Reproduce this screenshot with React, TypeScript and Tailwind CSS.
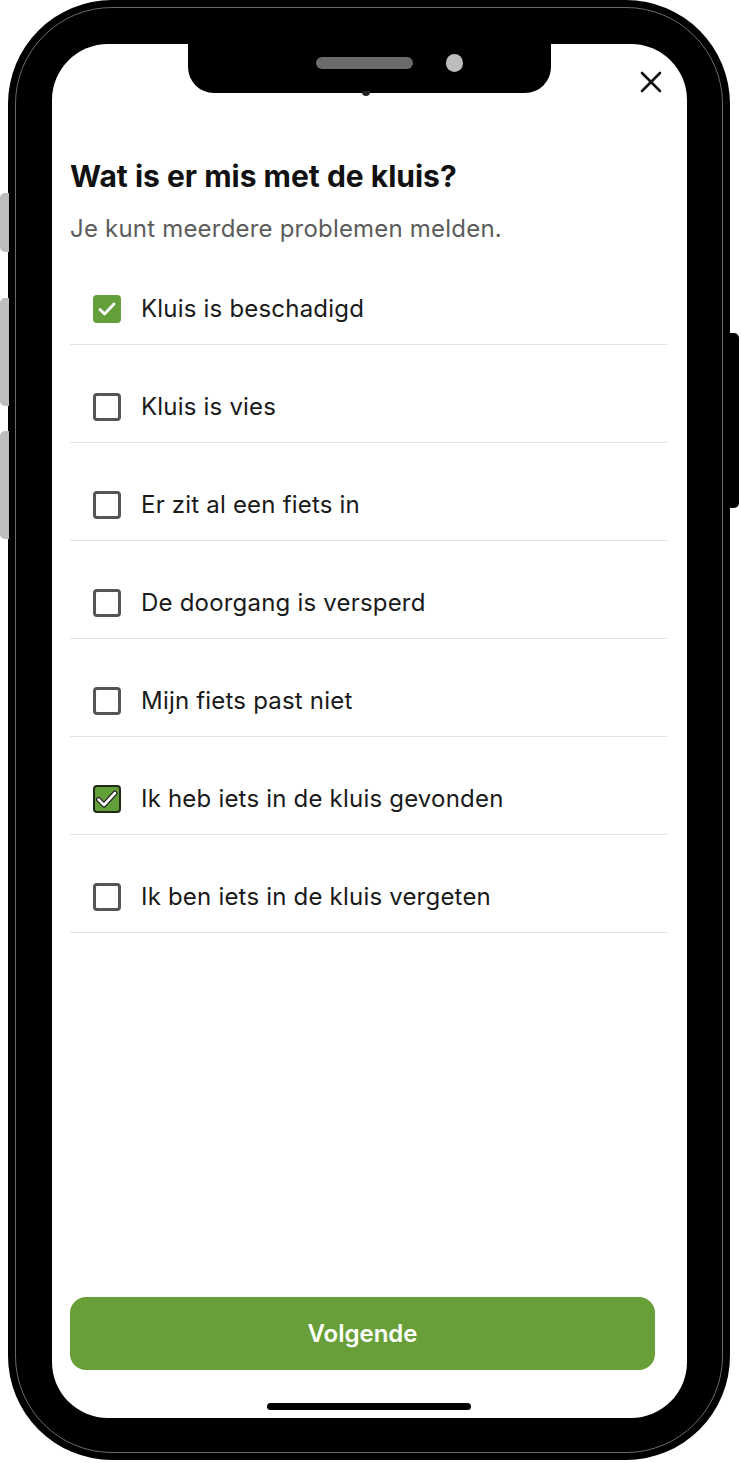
import React, { useState } from 'react';

const problems = [
  'Kluis is beschadigd',
  'Kluis is vies',
  'Er zit al een fiets in',
  'De doorgang is versperd',
  'Mijn fiets past niet',
  'Ik heb iets in de kluis gevonden',
  'Ik ben iets in de kluis vergeten',
];

function Checkbox({ checked, outlined }: { checked: boolean; outlined?: boolean }) {
  if (!checked) {
    return <div className="w-[28px] h-[28px] shrink-0 rounded-[4px] border-[3px] border-[#555555] bg-white" />;
  }
  if (outlined) {
    return (
      <div className="w-[28px] h-[28px] shrink-0 rounded-[4px] bg-[#64a03a] border-2 border-[#1f2a14] flex items-center justify-center">
        <svg width="24" height="24" viewBox="0 0 24 24" fill="none">
          <path d="M3.5 12.5l5.5 5.5 11-12" stroke="#1a1a1a" strokeWidth="5" strokeLinecap="round" strokeLinejoin="round" />
          <path d="M3.5 12.5l5.5 5.5 11-12" stroke="#ffffff" strokeWidth="2.6" strokeLinecap="round" strokeLinejoin="round" />
        </svg>
      </div>
    );
  }
  return (
    <div className="w-[28px] h-[28px] shrink-0 rounded-[4px] bg-[#64a03a] flex items-center justify-center">
      <svg width="22" height="22" viewBox="0 0 22 22" fill="none">
        <path d="M4 11.5l4.5 4.5 9.5-10" stroke="#ffffff" strokeWidth="2.8" strokeLinecap="round" strokeLinejoin="round" />
      </svg>
    </div>
  );
}

export default function App() {
  const [selected, setSelected] = useState<number[]>([0, 5]);

  const toggle = (i: number) => {
    setSelected((prev) => (prev.includes(i) ? prev.filter((x) => x !== i) : [...prev, i]));
  };

  return (
    <div className="relative w-[741px] h-[1463px] bg-white overflow-hidden font-['Inter',sans-serif]">
      {/* side buttons */}
      <div className="absolute left-0 top-[193px] w-[9px] h-[59px] rounded-l-[5px] bg-[#bdbdbd]" />
      <div className="absolute left-0 top-[298px] w-[9px] h-[108px] rounded-l-[5px] bg-[#bdbdbd]" />
      <div className="absolute left-0 top-[431px] w-[9px] h-[108px] rounded-l-[5px] bg-[#bdbdbd]" />
      <div className="absolute left-[729px] top-[333px] w-[10px] h-[175px] rounded-r-[5px] bg-black" />

      {/* phone body */}
      <div className="ml-[8px] w-[722px] h-[1460px] rounded-[104px] bg-black p-[7px]">
        <div className="h-full rounded-[97px] border border-[#6a6a6a] pt-[36px] pb-[34px] pl-[36px] pr-[35px]">
          {/* screen */}
          <div className="relative h-full rounded-[56px] bg-white flex flex-col pl-[18px] pr-[20px]">
            {/* notch */}
            <div className="absolute left-[136px] top-0 w-[363px] h-[49px] rounded-b-[26px] bg-black flex items-center justify-center gap-[33px] pl-[40px] pb-[12px]">
              <div className="w-[97px] h-[12px] rounded-full bg-[#6b6b6b]" />
              <div className="w-[17px] h-[18px] rounded-full bg-[#bdbdbd]" />
            </div>
            <div className="absolute left-[310px] top-[47px] w-[8px] h-[5px] rounded-b-full bg-[#222]" />

            {/* close */}
            <div className="flex justify-end pt-[26px] pr-[4px]">
              <svg width="24" height="24" viewBox="0 0 24 24" fill="none">
                <path d="M3 3l18 18M21 3L3 21" stroke="#111111" strokeWidth="2.6" strokeLinecap="round" />
              </svg>
            </div>

            <h1 className="mt-[64px] text-[30px] leading-[36px] font-bold text-[#111111]">
              Wat is er mis met de kluis?
            </h1>
            <p className="mt-[19px] text-[24px] leading-[32px] tracking-[0.2px] text-[#5c5c5c]">
              Je kunt meerdere problemen melden.
            </p>

            <ul className="mt-[2px]">
              {problems.map((label, i) => (
                <li
                  key={label}
                  onClick={() => toggle(i)}
                  className="flex items-center gap-[20px] pl-[23px] pt-[48px] pb-[21px] border-b border-[#e3e3e3] cursor-pointer"
                >
                  <Checkbox checked={selected.includes(i)} outlined={i === 5} />
                  <span className="text-[24px] leading-[28px] tracking-[0.2px] text-[#1a1a1a]">{label}</span>
                </li>
              ))}
            </ul>

            <div className="flex-1" />

            <button className="mb-[48px] mr-[12px] h-[73px] rounded-[16px] bg-[#689f38] text-white text-[24px] font-semibold">
              Volgende
            </button>

            {/* home indicator */}
            <div className="absolute left-[215px] bottom-[8px] w-[204px] h-[7px] rounded-full bg-black" />
          </div>
        </div>
      </div>
    </div>
  );
}
